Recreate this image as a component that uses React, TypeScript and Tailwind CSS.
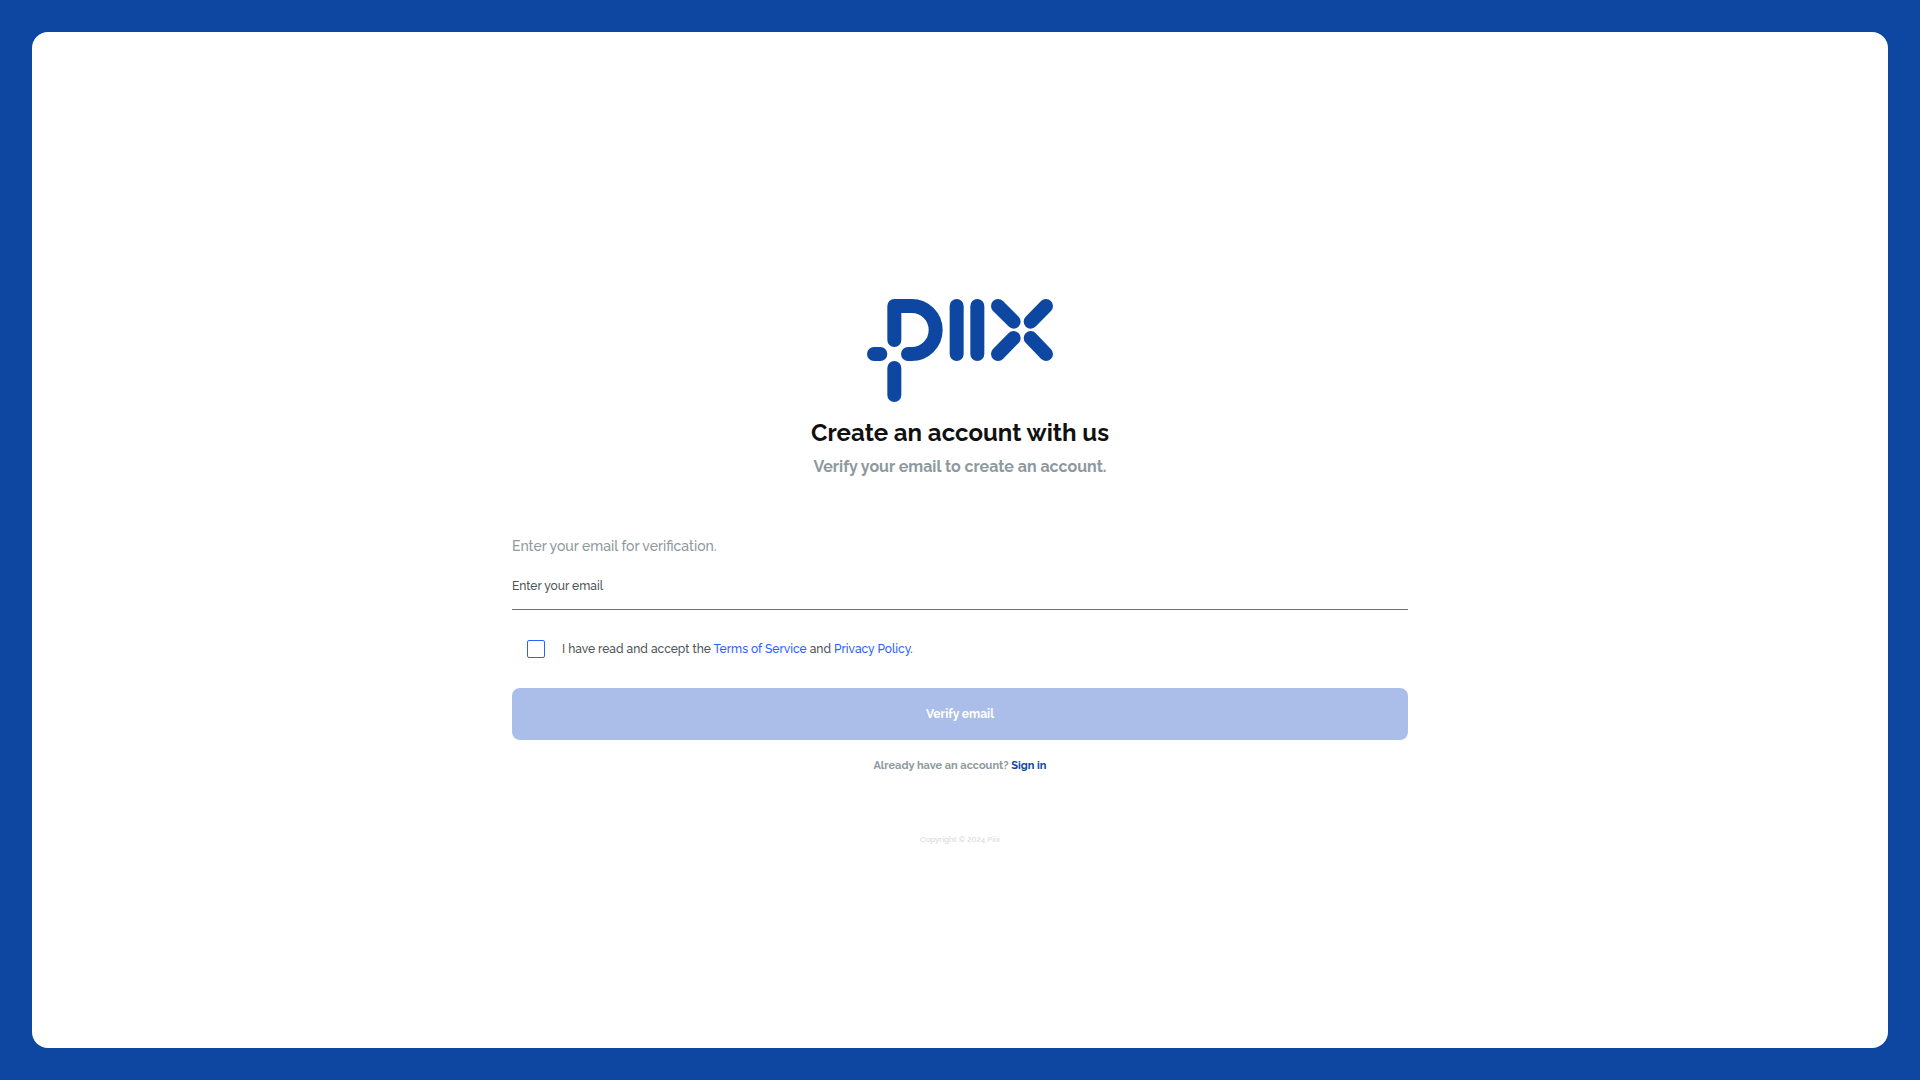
function Logo() {
  return (
    <svg viewBox="51 42 558 309" className="h-[103px] w-[186px]" role="img" aria-label="Piix" fill="none" stroke="#0d47a1" strokeWidth="42" strokeLinecap="round" strokeLinejoin="round">
      <path d="M133 165V63H185A72 72 0 0 1 185 207H174" />
      <path d="M72 207H91" />
      <path d="M133 249V330" />
      <path d="M320 63V207" />
      <path d="M382 63V207" />
      <path d="M444 63L491 110" />
      <path d="M588 63L542 110" />
      <path d="M444 207L491 159" />
      <path d="M588 207L542 159" />
    </svg>
  );
}

export default function App() {
  return (
    <div className="flex min-h-screen bg-[#0d47a1] p-8 font-['Raleway','Lato',sans-serif]">
      <main className="flex flex-1 flex-col items-center justify-center rounded-2xl bg-white px-8 pt-[66px]">
        <Logo />
        <h1 className="mt-[15px] text-2xl leading-8 font-bold text-[#111111]">Create an account with us</h1>
        <h2 className="mt-1 text-base leading-7 font-bold text-[#8d999d]">Verify your email to create an account.</h2>
        <form className="mt-[53px] flex w-full max-w-4xl flex-col" onSubmit={(e) => e.preventDefault()}>
          <label htmlFor="email" className="text-sm leading-6 font-medium text-[#8d999d]">
            Enter your email for verification.
          </label>
          <input
            id="email"
            type="email"
            placeholder="Enter your email"
            className="mt-1 h-12 w-full border-b border-[#6f7276] text-xs font-medium outline-none placeholder:text-[#4d5558]"
          />
          <div className="mt-[29px] flex items-center gap-[17px] px-[15px]">
            <input
              id="terms"
              type="checkbox"
              className="size-[18px] shrink-0 appearance-none rounded-xs border border-[#2962ff] checked:bg-[#2962ff]"
            />
            <label htmlFor="terms" className="text-xs leading-5 font-medium text-[#4d5558]">
              I have read and accept the{" "}
              <a href="#terms" className="text-[#2962ff]">Terms of Service</a> and{" "}
              <a href="#privacy" className="text-[#2962ff]">Privacy Policy</a>.
            </label>
          </div>
          <button type="submit" className="mt-[29px] h-13 w-full rounded-lg bg-[#abbee9] text-xs font-bold text-white">
            Verify email
          </button>
        </form>
        <p className="mt-4 text-[11px] leading-5 font-bold text-[#8d999d]">
          Already have an account? <a href="#signin" className="text-[#0d47a1]">Sign in</a>
        </p>
        <footer className="mt-[55px] text-[8px] leading-4 font-medium text-[#d5d8d9]">Copyright © 2024 Piix</footer>
      </main>
    </div>
  );
}
